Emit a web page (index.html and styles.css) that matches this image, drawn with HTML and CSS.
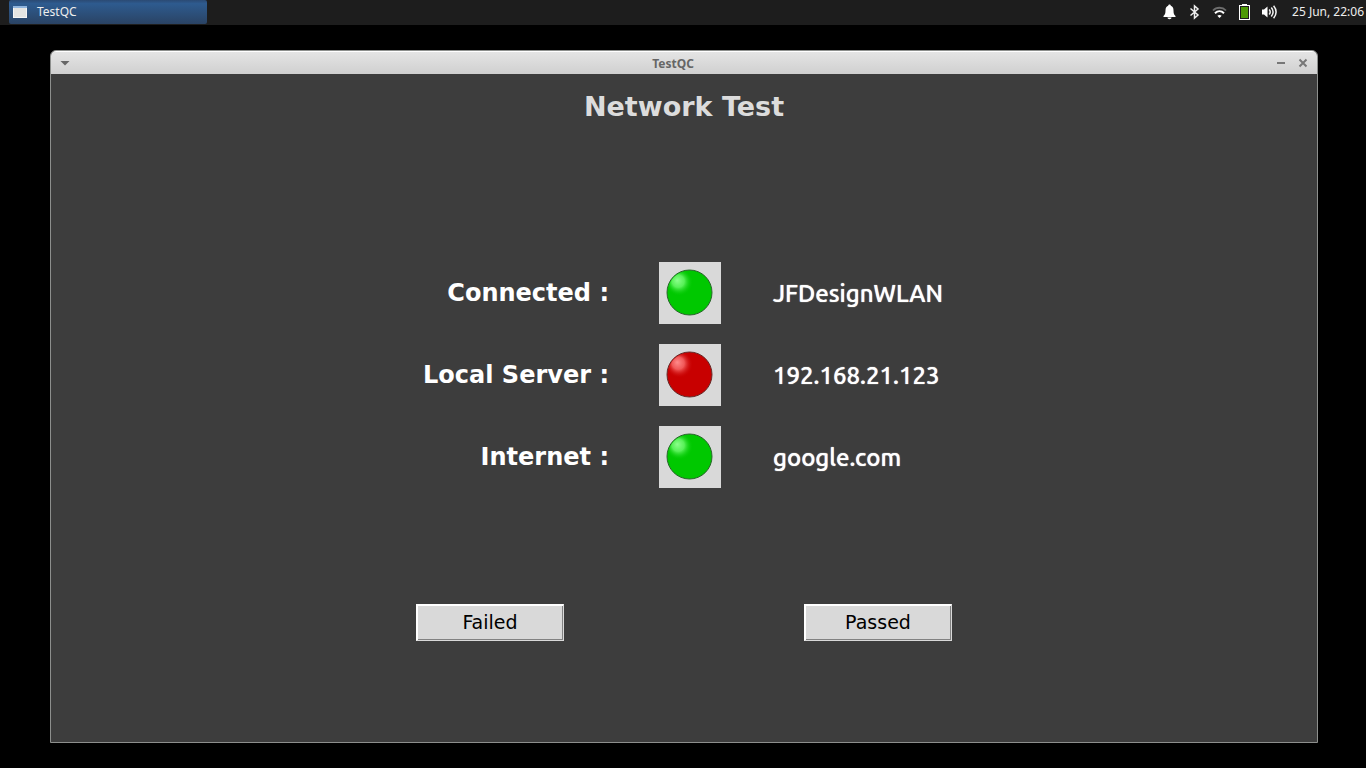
FILE: index.html
```html
<!DOCTYPE html>
<html lang="en">
<head>
<meta charset="utf-8">
<meta name="viewport" content="width=device-width, initial-scale=1">
<title>TestQC</title>
<link rel="stylesheet" href="styles.css">
</head>
<body>
<header class="panel">
  <button class="task" type="button">
    <svg class="task-icon" width="14" height="12" viewBox="0 0 14 12" aria-hidden="true"><rect x="0.5" y="0.5" width="13" height="11" fill="#e4e4e2" stroke="#f4f4f4"/><path d="M0 0h14v2H0z" fill="#8fb4de"/></svg>
    <span>TestQC</span>
  </button>
  <div class="tray">
    <svg class="tray-icon" viewBox="0 0 14 16" aria-hidden="true"><path d="M7 .5c.9 0 1.300.6 1.300 1.300C10.300 2.400 11 4.300 11 6.500c0 3 .6 4.300 2 5.500v1H1v-1c1.400-1.200 2-2.500 2-5.500 0-2.200.7-4.100 2.700-4.700C5.700 1.100 6.100.5 7 .5zM5 13.500h4c0 1-.8 1.700-2 1.700s-2-.7-2-1.700z" fill="#fff"/></svg>
    <svg class="tray-icon" viewBox="0 0 10 16" aria-hidden="true"><path d="M1 4.500l7.500 6.500L5 14V2l3.500 3L1 11.500" fill="none" stroke="#eee" stroke-width="1.500"/></svg>
    <svg class="tray-icon" viewBox="0 0 16 16" aria-hidden="true"><path d="M1.500 6.500C5 2.800 11 2.800 14.500 6.500" fill="none" stroke="#6d6d6d" stroke-width="1.800"/><path d="M3.500 9.200C6.200 6.600 9.800 6.600 12.500 9.200" fill="none" stroke="#fff" stroke-width="2"/><path d="M5.800 11.800C7 10.800 9 10.800 10.200 11.800L8 14z" fill="#fff"/></svg>
    <svg class="tray-icon" viewBox="0 0 11 16" aria-hidden="true"><path d="M3 0h5v2H3z" fill="#fff"/><rect x=".5" y="1.500" width="10" height="14" fill="#1d1d1d" stroke="#fff"/><path d="M2 3h7v11H2z" fill="#4e9a06"/></svg>
    <svg class="tray-icon" viewBox="0 0 17 16" aria-hidden="true"><path d="M1 5.500h2L6.500 2.500v11L3 10.500H1z" fill="#fff"/><path d="M8.200 5.500q2 2.500 0 5M10.300 3.500q3.600 4.500 0 9M12.600 1.800q5 6.200 0 12.400" fill="none" stroke="#f2f2f2" stroke-width="1.500"/></svg>
    <time class="clock">25 Jun, 22:06</time>
  </div>
</header>
<main class="desktop">
  <section class="window">
    <div class="titlebar">
      <button class="tool" type="button" aria-label="Window menu"><svg width="10" height="10" viewBox="0 0 10 10" aria-hidden="true"><path d="M.5 3h9L5 7.500z" fill="#666"/></svg></button>
      <span class="window-title">TestQC</span>
      <div class="tools">
        <button class="tool" type="button" aria-label="Minimize"><svg width="10" height="10" viewBox="0 0 10 10" aria-hidden="true"><path d="M1 4h8v2H1z" fill="#777"/></svg></button>
        <button class="tool" type="button" aria-label="Close"><svg width="10" height="10" viewBox="0 0 10 10" aria-hidden="true"><path d="M1.500 1.500l7 7M8.500 1.500l-7 7" stroke="#777" stroke-width="2"/></svg></button>
      </div>
    </div>
    <div class="content">
      <h1 class="heading">Network Test</h1>
      <svg class="defs" aria-hidden="true">
        <defs>
          <radialGradient id="shine-green" cx=".27" cy=".27" r=".31" fx=".22" fy=".22"><stop offset="0" stop-color="#8cff8c"/><stop offset=".45" stop-color="#62f562" stop-opacity=".9"/><stop offset="1" stop-color="#00c800" stop-opacity="0"/></radialGradient>
          <radialGradient id="shine-red" cx=".27" cy=".27" r=".31" fx=".22" fy=".22"><stop offset="0" stop-color="#ff8c8c"/><stop offset=".45" stop-color="#f56262" stop-opacity=".9"/><stop offset="1" stop-color="#c80000" stop-opacity="0"/></radialGradient>
        </defs>
      </svg>
      <dl class="checks">
        <dt class="label">Connected :</dt>
        <dd class="lamp"><svg width="48" height="48" viewBox="0 0 48 48" role="img" aria-label="OK"><circle cx="24.500" cy="24.500" r="22.500" fill="#00c800" stroke="#28662a"/><circle cx="24.500" cy="24.500" r="22" fill="url(#shine-green)"/></svg></dd>
        <dd class="value">JFDesignWLAN</dd>
        <dt class="label">Local Server :</dt>
        <dd class="lamp"><svg width="48" height="48" viewBox="0 0 48 48" role="img" aria-label="Error"><circle cx="24.500" cy="24.500" r="22.500" fill="#c80000" stroke="#662a28"/><circle cx="24.500" cy="24.500" r="22" fill="url(#shine-red)"/></svg></dd>
        <dd class="value">192.168.21.123</dd>
        <dt class="label">Internet :</dt>
        <dd class="lamp"><svg width="48" height="48" viewBox="0 0 48 48" role="img" aria-label="OK"><circle cx="24.500" cy="24.500" r="22.500" fill="#00c800" stroke="#28662a"/><circle cx="24.500" cy="24.500" r="22" fill="url(#shine-green)"/></svg></dd>
        <dd class="value">google.com</dd>
      </dl>
      <div class="actions">
        <button class="action" type="button">Failed</button>
        <button class="action" type="button">Passed</button>
      </div>
    </div>
  </section>
</main>
</body>
</html>
```
FILE: styles.css
```css
* {
  box-sizing: border-box;
}

body {
  display: flex;
  flex-direction: column;
  min-height: 100vh;
  margin: 0;
  background: #000;
  font-family: "Noto Sans", sans-serif;
}

button {
  margin: 0;
  padding: 0;
  border: 0;
  background: none;
  color: inherit;
  font: inherit;
}

svg {
  display: block;
}

.panel {
  display: flex;
  justify-content: space-between;
  height: 25px;
  padding: 0 2px 0 9px;
  background: #1d1d1d;
  color: #eee;
  font-size: 12px;
  line-height: 16px;
}

.task {
  display: flex;
  align-items: center;
  gap: 10px;
  width: 198px;
  height: 24px;
  padding: 0 4px;
  border-radius: 2px;
  background: linear-gradient(#2b4a74, #2e5b8f 15%, #2a4364);
}

.tray {
  display: flex;
  align-items: center;
  height: 24px;
}

.tray-icon {
  width: 25px;
  height: 16px;
}

.clock {
  margin-left: 10px;
  white-space: nowrap;
}

.desktop {
  display: flex;
  flex: 1;
  padding: 25px 48px 25px 50px;
}

.window {
  display: flex;
  flex: 1;
  flex-direction: column;
  overflow: hidden;
  border: 1px solid #8d8f8d;
  border-radius: 6px 6px 0 0;
  background: #3d3d3d;
}

.titlebar {
  display: flex;
  align-items: center;
  height: 23px;
  padding: 0 9px;
  border-top: 1px solid #fff;
  background: linear-gradient(#e4e4e4, #d0d0d0);
}

.tools {
  display: flex;
  gap: 12px;
}

.tool {
  width: 10px;
  height: 10px;
}

.window-title {
  flex: 1;
  color: #666;
  font-size: 12px;
  font-weight: 700;
  text-align: center;
}

.content {
  display: flex;
  flex: 1;
  flex-direction: column;
  align-items: center;
  padding: 17px 16px 101px;
  font-family: "DejaVu Sans", sans-serif;
}

.heading {
  margin: 0;
  color: #dcdcdc;
  font-size: 27px;
  font-weight: 700;
  line-height: 32px;
}

.defs {
  position: absolute;
  width: 0;
  height: 0;
}

.checks {
  display: grid;
  grid-template-columns: auto 62px auto;
  align-items: center;
  gap: 20px 50px;
  margin: 139px 0 auto;
  color: #fff;
}

.label {
  text-align: right;
  font-size: 24px;
  font-weight: 700;
}

.lamp {
  margin: 0;
  padding: 6px;
  height: 62px;
  background: #d9d9d9;
}

.value {
  margin: 0;
  padding: 0 2px;
  font-family: Ubuntu, "Noto Sans", sans-serif;
  font-size: 24px;
  font-weight: 500;
  text-shadow: 0 0 1px #fff;
}

.actions {
  display: flex;
  gap: 240px;
}

.action {
  width: 148px;
  height: 37px;
  padding-bottom: 2px;
  border: 1px solid;
  border-color: #fff #d9d9d9 #d9d9d9 #fff;
  background: #d9d9d9;
  box-shadow: inset 1px 1px #fff, inset -1px -1px #828282;
  color: #000;
  font-size: 19px;
}
```
